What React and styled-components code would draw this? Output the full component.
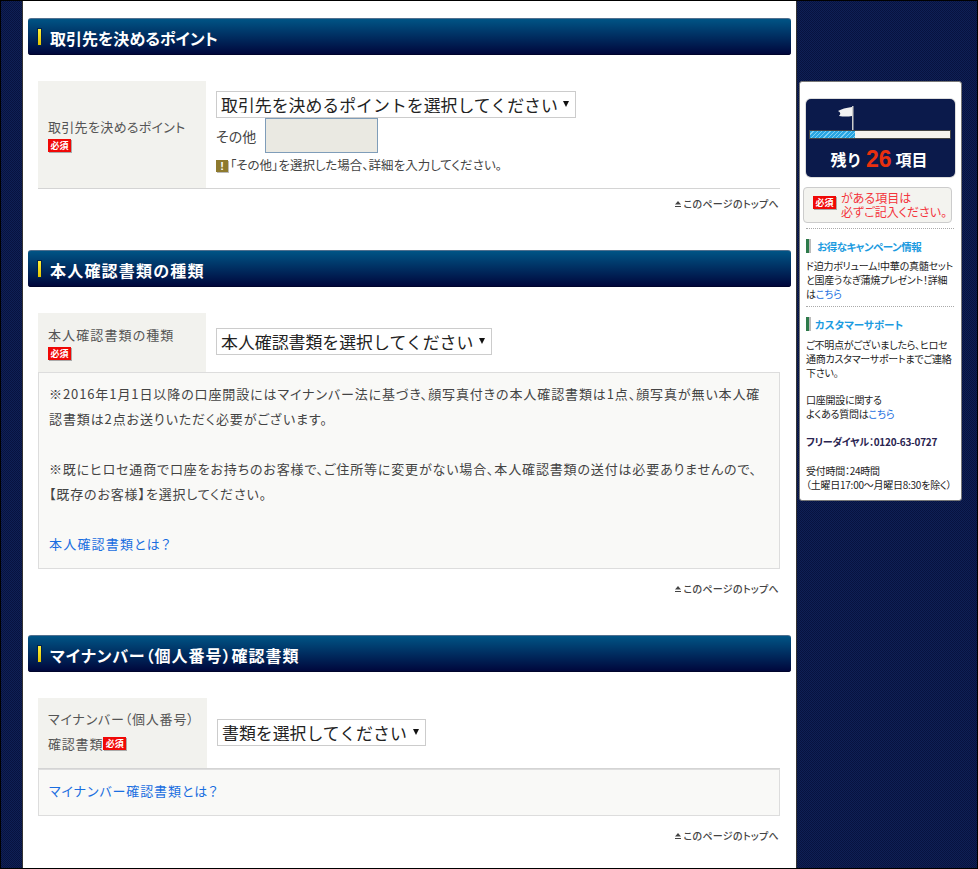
import React from "react";
import styled, { createGlobalStyle } from "styled-components";

const Global = createGlobalStyle`
  html, body { margin: 0; padding: 0; background: #0a1745; }
  body { font-family: "Noto Sans CJK JP", "Liberation Sans", sans-serif; font-feature-settings: "palt"; }
  * { box-sizing: border-box; }
`;

const Frame = styled.div`
  width: 978px; height: 869px; overflow: hidden;
  border: 1px solid #000;
  display: flex; align-items: flex-start;
  background: conic-gradient(#0f2055 25%, #07123f 0 50%, #0f2055 0 75%, #07123f 0) 0 0 / 2px 2px;
`;
const Main = styled.main`
  width: 775px; height: 867px; margin-left: 21px; flex: none;
  padding: 17px 5px 0;
  background: #fff;
  border-left: 1px solid #333; border-right: 1px solid #333;
`;
const Section = styled.section`
  margin-bottom: ${p => p.$gap}px;
`;
const Header = styled.h2`
  height: 37px; margin: 0 0 26px; padding: 2px 0 0 10px;
  display: flex; align-items: center; gap: 9px;
  background: linear-gradient(#005485, #00053a);
  border-top: 1px solid #50708f; border-radius: 3px;
  box-shadow: inset 0 -1px 0 #00042c;
  color: #fff; font-size: 16px; font-weight: 700; letter-spacing: ${p => p.$ls || 0}px;
`;
const Marker = styled.span`
  width: 3px; height: 16px; margin-top: -3px; flex: none;
  background: linear-gradient(#ffef3a, #e3c400);
  box-shadow: 0 0 0 1px #00234f;
`;
const Body = styled.div`
  margin: 0 11px 0 10px;
`;
const Row = styled.div`
  display: flex; align-items: stretch; min-height: ${p => p.$h}px;
  border-bottom: ${p => (p.$line ? "1px solid #d4d4d4" : "none")};
`;
const Label = styled.div`
  width: ${p => p.$w || 168}px; flex: none;
  padding: ${p => p.$pad || "0 10px 1px"}; background: #f2f2ee;
  display: flex; flex-direction: column; justify-content: center; align-items: flex-start;
  color: #555; font-size: 13px; line-height: ${p => p.$lh || 20}px;
  letter-spacing: ${p => p.$ls || 0}px;
  & > span:last-child { margin-top: ${p => p.$badgeGap ?? 2}px; }
`;
const InlineLabel = styled.span`
  display: inline-flex; align-items: center;
`;
const Badge = styled.span`
  display: inline-block; flex: none; width: 23px; height: 13px;
  background: #f00806; color: #fff;
  font-size: 9px; font-weight: 700; line-height: 13px; text-align: center; letter-spacing: 0;
  box-shadow: 1px 1px 0 #aaa;
`;
const Field = styled.div`
  flex: 1; padding: ${p => p.$pad || "10px 10px 0"};
  display: flex; flex-direction: column; align-items: flex-start;
  justify-content: ${p => p.$center ? "center" : "flex-start"};
  font-size: 13px; color: #444;
`;
const SelectWrap = styled.div`
  position: relative; width: ${p => p.$w}px; height: 27px;
  &::after {
    content: ""; position: absolute; right: 7px; top: 10px;
    border-left: 3px solid transparent; border-right: 3px solid transparent;
    border-top: 6px solid #111; pointer-events: none;
  }
`;
const Select = styled.select`
  appearance: none; display: block;
  width: 100%; height: 27px; padding: 0 0 4px 4px;
  background: #fff; color: #222;
  border: 1px solid #ccc; border-radius: 0;
  font-family: inherit; font-size: 16.9px; font-feature-settings: normal;
`;
const OtherLine = styled.div`
  display: flex; align-items: center; gap: 9px; font-size: 14px; color: #444;
`;
const OtherInput = styled.input`
  width: 113px; height: 35px; background: #eae9e2;
  border: 1px solid #7f9db9; padding: 0;
`;
const Hint = styled.div`
  margin-top: 3px; display: flex; align-items: center; gap: 1px; font-size: 12.5px; line-height: 17px; color: #444;
`;
const Alert = styled.span`
  width: 12px; height: 12px; background: #8e7a2e; color: #fff; margin-top: 3px;
  font: 700 11px/12px "Liberation Sans", sans-serif; text-align: center;
  box-shadow: 1px 1px 0 #bbb; margin-right: 1px;
`;
const Note = styled.div`
  padding: 8px 9px 8px 10px; background: #f9f9f7; border: 1px solid #ddd;
  font-size: 13px; line-height: 25px; color: #444; white-space: nowrap;
  min-height: ${p => p.$h}px;
`;
const Para = styled.p`
  margin: 0 0 25px; letter-spacing: ${p => p.$ls}px;
  &:last-child { margin: 0; }
`;
const Link = styled.a`
  color: #1a6ee0; text-decoration: none; letter-spacing: ${p => p.$ls || 0}px;
`;
const TopLink = styled.div`
  display: flex; justify-content: flex-end; align-items: center; gap: 3px;
  margin-top: ${p => p.$mt}px; height: 14px; padding-right: 1px;
  font-size: 10px; font-weight: 500; color: #444; line-height: 14px; letter-spacing: .3px;
`;
const Side = styled.aside`
  width: 163px; height: 420px; margin: 80px 0 0 2px; flex: none;
  padding: 17px 6px 0 3px;
  background: #fff; border: 1px solid #777; border-radius: 3px;
  font-size: 10px; line-height: 14px; color: #222;
`;
const Counter = styled.div`
  width: 149px; height: 78px; margin-left: 3px; padding: 7px 3px 0;
  background: #0b1a4b; border-radius: 5px;
  box-shadow: 0 0 0 1px #ddd;
  color: #fff;
`;
const Flag = styled.svg`
  display: block; margin-left: 28px;
`;
const Track = styled.div`
  width: 142px; height: 9px; background: #f6f3ee; border: 1px solid #444;
`;
const Fill = styled.div`
  height: 100%;
  background: repeating-linear-gradient(135deg, #2aa6e2 0 2px, #7fd0f2 2px 3px);
`;
const Count = styled.div`
  margin-top: 7px; padding-right: 3px; display: flex; justify-content: center; align-items: center; gap: 4px;
  font-size: 16px; font-weight: 700; line-height: 26px;
  b { font: 700 23px/26px "Liberation Sans", sans-serif; color: #e8300f; }
`;
const Remain = styled.span`
  letter-spacing: 1.5px;
`;
const Required = styled.div`
  width: 149px; height: 36px; margin-top: 10px;
  padding: 3px 0 0 9px; display: flex; gap: 5px;
  background: #f3f3ef; border: 1px solid #ccc; border-radius: 4px;
  color: #f4333c; font-size: 12px; line-height: 14px;
  span:first-child { margin-top: 5px; }
`;
const Block = styled.div`
  margin: ${p => p.$mt}px 0 0 3px; padding-top: 10px; width: 148px;
  border-top: 1px dotted #aaa;
`;
const SideHead = styled.h3`
  margin: 0 0 ${p => p.$mb}px; height: 14px;
  display: flex; gap: ${p => p.$gap}px;
  color: #1c9be0; font-size: 10.5px; font-weight: 700; line-height: 16px;
  letter-spacing: ${p => p.$ls || 0}px;
`;
const SideBar = styled.span`
  width: 3px; height: 14px; flex: none;
  background: #2d7a4a; box-shadow: 2px 0 0 #bbb;
`;
const SideText = styled.p`
  margin: 0 0 ${p => p.$mb ?? 13}px; 
  color: ${p => p.$dark ? "#2a2450" : "#222"};
  font-weight: ${p => p.$dark ? 700 : 400};
  letter-spacing: -.25px;
  white-space: nowrap;
`;

const Up = () => (
  <svg width="6" height="6" viewBox="0 0 6 6"><path d="M3 0 6 3.5H0Z M0 5h6v1H0Z" fill="#444" /></svg>
);
const Top = ({ mt }) => (
  <TopLink $mt={mt}><Up />このページのトップへ</TopLink>
);
const Pick = ({ w, children }) => (
  <SelectWrap $w={w}><Select><option>{children}</option></Select></SelectWrap>
);

export default function App() {
  return (
    <>
      <Global />
      <Frame>
        <Main>
          <Section $gap={39}>
            <Header>
              <Marker />取引先を決めるポイント
            </Header>
            <Body>
              <Row $line $h={108}>
                <Label $ls={0.3}>
                  取引先を決めるポイント
                  <Badge>必須</Badge>
                </Label>
                <Field>
                  <Pick w={360}>取引先を決めるポイントを選択してください</Pick>
                  <OtherLine>その他 <OtherInput /></OtherLine>
                  <Hint><Alert>!</Alert>「その他」を選択した場合、詳細を入力してください。</Hint>
                </Field>
              </Row>
              <Top mt={8} />
            </Body>
          </Section>
          <Section $gap={39}>
            <Header $ls={1.2}>
              <Marker />本人確認書類の種類
            </Header>
            <Body>
              <Row $h={59}>
                <Label $ls={1.1}>
                  本人確認書類の種類
                  <Badge>必須</Badge>
                </Label>
                <Field $center $pad="0 10px 2px">
                  <Pick w={276}>本人確認書類を選択してください</Pick>
                </Field>
              </Row>
              <Note $h={197}>
                <Para $ls={0.9}>※2016年1月1日以降の口座開設にはマイナンバー法に基づき、顔写真付きの本人確認書類は1点、顔写真が無い本人確<br />認書類は2点お送りいただく必要がございます。</Para>
                <Para $ls={0.85}>※既にヒロセ通商で口座をお持ちのお客様で、ご住所等に変更がない場合、本人確認書類の送付は必要ありませんので、<br />【既存のお客様】を選択してください。</Para>
                <Para $ls={0}><Link $ls={1.2}>本人確認書類とは？</Link></Para>
              </Note>
              <Top mt={13} />
            </Body>
          </Section>
          <Section $gap={0}>
            <Header $ls={1}>
              <Marker />マイナンバー（個人番号）確認書類
            </Header>
            <Body>
              <Row $line $h={71}>
                <Label $w={169} $lh={25} $ls={0.8} $badgeGap={0} $pad="0 10px 4px">
                  マイナンバー（個人番号）
                  <InlineLabel>確認書類<Badge>必須</Badge></InlineLabel>
                </Label>
                <Field $center $pad="0 10px 2px">
                  <Pick w={209}>書類を選択してください</Pick>
                </Field>
              </Row>
              <Note $h={47}><Link $ls={0.9}>マイナンバー確認書類とは？</Link></Note>
              <Top mt={13} />
            </Body>
          </Section>
        </Main>
        <Side>
          <Counter>
            <Flag width="18" height="24" viewBox="0 0 18 24">
              <path d="M1 5 Q6 2 15 1 V10 Q9 11 2 10 Q5 7 1 5Z" fill="#f2f2f2" />
              <rect x="15" y="0" width="1.5" height="24" fill="#ccc" />
            </Flag>
            <Track><Fill style={{ width: `${(45 / 140) * 100}%` }} /></Track>
            <Count><Remain>残り</Remain> <b>26</b> 項目</Count>
          </Counter>
          <Required>
            <Badge>必須</Badge>
            <span>がある項目は<br />必ずご記入ください。</span>
          </Required>
          <Block $mt={5}>
            <SideHead $gap={8} $mb={6} $ls={-0.5}><SideBar />お得なキャンペーン情報</SideHead>
            <SideText $mb={5}>ド迫力ボリューム!中華の真髄セット<br />と国産うなぎ蒲焼プレゼント！詳細<br />は<Link>こちら</Link></SideText>
          </Block>
          <Block $mt={0}>
            <SideHead $gap={6} $mb={7}><SideBar />カスタマーサポート</SideHead>
            <SideText>ご不明点がございましたら、ヒロセ<br />通商カスタマーサポートまでご連絡<br />下さい。</SideText>
            <SideText $mb={14}>口座開設に関する<br />よくある質問は<Link>こちら</Link></SideText>
            <SideText $dark $mb={15}>フリーダイヤル：0120-63-0727</SideText>
            <SideText $mb={0}>受付時間：24時間<br />（土曜日17:00〜月曜日8:30を除く）</SideText>
          </Block>
        </Side>
      </Frame>
    </>
  );
}
